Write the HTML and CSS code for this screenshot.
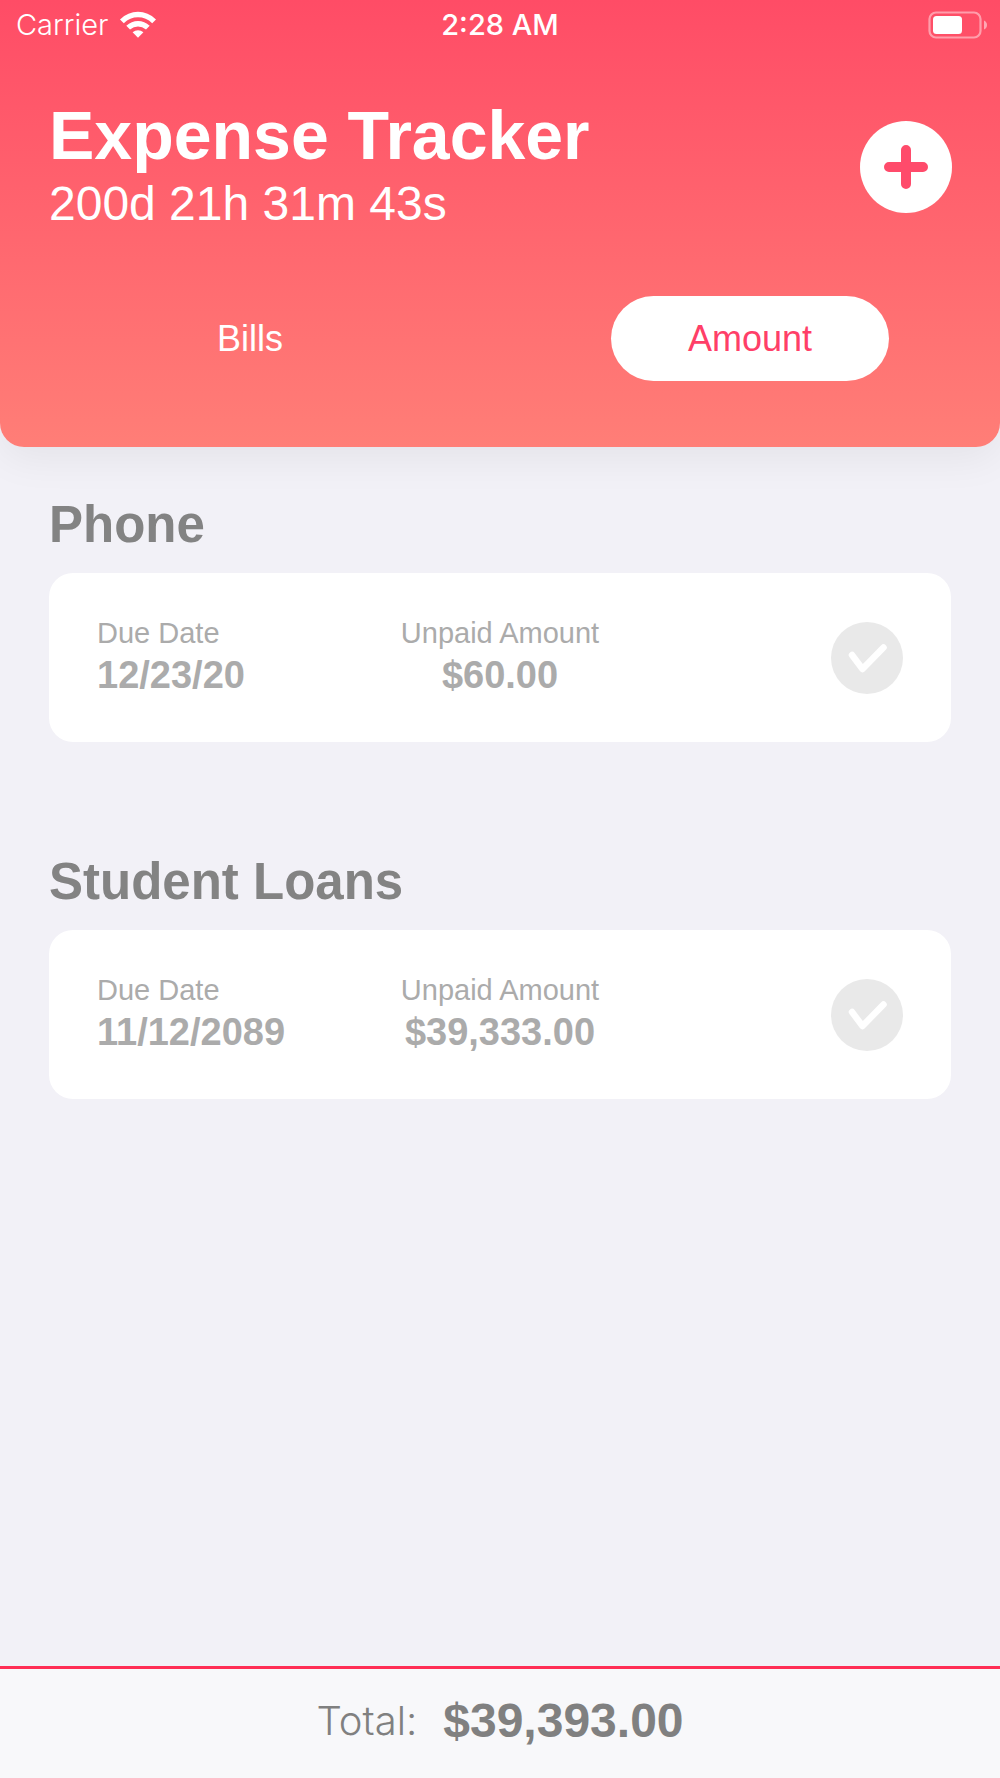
FILE: index.html
```html
<!DOCTYPE html>
<html lang="en">
<head>
    <meta charset="UTF-8">
    <meta name="viewport" content="width=device-width, initial-scale=1.0">
    <title>Expense Tracker</title>
    <link rel="stylesheet" href="styles.css">
</head>
<body>

<header class="header">
    <div class="status-bar">
        <div class="carrier">
            <span>Carrier</span>
            <svg width="38" height="28" viewBox="0 0 38 28" fill="#fff">
                <path d="M1 8.400Q9 .8 19 .8T37 8.400L33.200 12.200Q27 6.300 19 6.300T4.800 12.200Z"/>
                <path d="M7.300 14.700Q12.500 10 19 10T30.700 14.700L27 18.600Q23.300 15.500 19 15.500T11 18.600Z"/>
                <path d="M13.600 21.200Q16 19.300 19 19.300T24.400 21.200L19 26.800Z"/>
            </svg>
        </div>
        <span class="time">2:28 AM</span>
        <svg class="battery" width="60" height="28" viewBox="0 0 60 28" fill="none">
            <rect x="1.500" y="1.500" width="51" height="25" rx="6.500" stroke="#fff" stroke-opacity=".45" stroke-width="2.200"/>
            <rect x="5" y="5" width="29" height="18" rx="3.500" fill="#fff"/>
            <path d="M56 9.500Q59 11 59 14T56 18.500Z" fill="#fff" fill-opacity=".5"/>
        </svg>
    </div>

    <div class="title-row">
        <div>
            <h1>Expense Tracker</h1>
            <p class="countdown">200d 21h 31m 43s</p>
        </div>
        <button class="add-button" type="button" aria-label="Add expense">
            <svg width="44" height="44" viewBox="0 0 44 44" stroke="#ff4b6b" stroke-width="10" stroke-linecap="round">
                <path d="M22 5V39M5 22H39"/>
            </svg>
        </button>
    </div>

    <div class="tabs">
        <button class="tab" type="button">Bills</button>
        <button class="tab active" type="button">Amount</button>
    </div>
</header>

<main class="expenses">
    <section class="expense">
        <h2>Phone</h2>
        <div class="card">
            <div class="due">
                <p class="label">Due Date</p>
                <p class="value">12/23/20</p>
            </div>
            <div class="amount">
                <p class="label">Unpaid Amount</p>
                <p class="value">$60.00</p>
            </div>
            <label class="paid">
                <input type="checkbox" aria-label="Phone paid">
                <svg width="72" height="72" viewBox="0 0 72 72" fill="none" stroke="#fff" stroke-width="6.500" stroke-linecap="round" stroke-linejoin="round">
                    <path d="M21 33L31.500 47L52.500 25.500"/>
                </svg>
            </label>
        </div>
    </section>

    <section class="expense">
        <h2>Student Loans</h2>
        <div class="card">
            <div class="due">
                <p class="label">Due Date</p>
                <p class="value">11/12/2089</p>
            </div>
            <div class="amount">
                <p class="label">Unpaid Amount</p>
                <p class="value">$39,333.00</p>
            </div>
            <label class="paid">
                <input type="checkbox" aria-label="Student Loans paid">
                <svg width="72" height="72" viewBox="0 0 72 72" fill="none" stroke="#fff" stroke-width="6.500" stroke-linecap="round" stroke-linejoin="round">
                    <path d="M21 33L31.500 47L52.500 25.500"/>
                </svg>
            </label>
        </div>
    </section>
</main>

<footer class="total">
    <span class="total-label">Total:</span>
    <span class="total-value">$39,393.00</span>
</footer>

</body>
</html>
```

FILE: styles.css
```css
* {
    box-sizing: border-box;
}
body {
    font-family: "Liberation Sans", Arial, sans-serif;
    margin: 0;
    min-height: 100vh;
    display: flex;
    flex-direction: column;
    background-color: #f2f1f7;
}
h1, h2, p {
    margin: 0;
}
svg {
    display: block;
}

/* Header */
.header {
    padding-bottom: 66px;
    background: linear-gradient(#ff4c66, #ff7e77);
    border-radius: 0 0 24px 24px;
    box-shadow: 0 12px 40px rgba(0, 0, 0, 0.06);
    color: #fff;
}
.status-bar {
    display: grid;
    grid-template-columns: 1fr auto 1fr;
    align-items: center;
    height: 48px;
    padding: 1px 12px 0;
    font-family: Inter, sans-serif;
    font-size: 29px;
}
.carrier {
    display: flex;
    align-items: center;
    gap: 11px;
    padding-left: 4px;
    font-weight: 300;
}
.time {
    font-weight: 500;
}
.battery {
    justify-self: end;
}
.title-row {
    display: flex;
    justify-content: space-between;
    align-items: center;
    padding: 48px 48px 0 49px;
}
h1 {
    font-size: 68px;
    line-height: 79px;
}
.countdown {
    padding-bottom: 6px;
    font-size: 48px;
    line-height: 57px;
}
.add-button {
    display: flex;
    align-items: center;
    justify-content: center;
    width: 92px;
    height: 92px;
    padding: 0;
    border: none;
    border-radius: 50%;
    background-color: #fff;
    cursor: pointer;
}
.tabs {
    display: grid;
    grid-template-columns: 1fr 1fr;
    justify-items: center;
    margin-top: 58px;
}
.tab {
    width: 278px;
    height: 85px;
    border: none;
    border-radius: 43px;
    background: none;
    color: #fff;
    font-family: inherit;
    font-size: 36px;
    cursor: pointer;
}
.tab.active {
    background-color: #fff;
    color: #ff3f68;
}

/* Expense list */
.expenses {
    flex: 1;
    display: flex;
    flex-direction: column;
    gap: 112px;
    padding: 50px 49px;
}
h2 {
    margin-bottom: 20px;
    color: #838383;
    font-size: 51px;
    line-height: 56px;
}
.card {
    display: grid;
    grid-template-columns: 1fr 1fr 1fr;
    align-items: center;
    padding: 42px 48px;
    border-radius: 24px;
    background-color: #fff;
    color: #ababab;
}
.amount {
    text-align: center;
}
.label {
    font-size: 29px;
    line-height: 36px;
}
.value {
    font-size: 38px;
    font-weight: bold;
    line-height: 49px;
}
.paid {
    display: grid;
    justify-self: end;
    cursor: pointer;
}
.paid input,
.paid svg {
    grid-area: 1 / 1;
}
.paid input {
    appearance: none;
    width: 72px;
    height: 72px;
    margin: 0;
    border-radius: 50%;
    background-color: #e9e9e9;
}
.paid input:checked {
    background-color: #ff4b6b;
}
.paid svg {
    z-index: 1;
}

/* Footer */
.total {
    display: flex;
    justify-content: center;
    align-items: center;
    gap: 26px;
    padding: 24px 48px 29px;
    border-top: 3px solid #ff2d55;
    background-color: #f8f8fa;
    color: #808080;
    line-height: 56px;
}
.total-label {
    font-family: Inter, sans-serif;
    font-size: 40px;
    font-weight: 300;
}
.total-value {
    font-size: 48px;
    font-weight: bold;
}
```
